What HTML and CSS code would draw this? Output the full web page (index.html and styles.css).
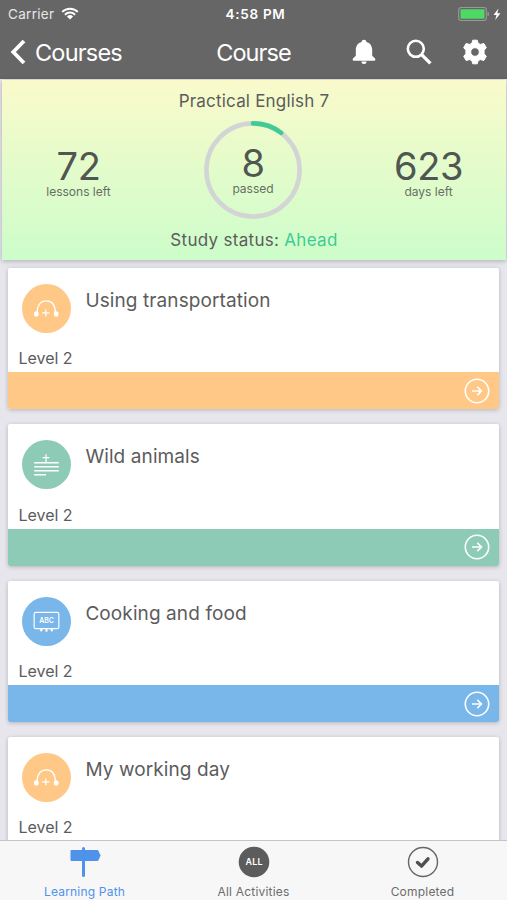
FILE: index.html
```html
<!DOCTYPE html>
<html lang="en">
<head>
  <meta charset="UTF-8">
  <meta name="viewport" content="width=device-width, initial-scale=1">
  <title>Course</title>
  <link rel="stylesheet" href="styles.css">
</head>
<body>
  <!-- shared icons -->
  <svg class="sprite" width="0" height="0">
    <symbol id="icon-audio" viewBox="0 0 50 50">
      <path d="M15.400 29.500c0-7.500 3.200-12.300 9.300-12.300s9.300 4.800 9.300 12.300" fill="none" stroke="currentColor" stroke-width="1.300"/>
      <ellipse cx="14.600" cy="30.600" rx="2.400" ry="2.800" fill="currentColor"/>
      <ellipse cx="34.900" cy="30.600" rx="2.400" ry="2.800" fill="currentColor"/>
      <path d="M24.300 26v7M20.500 29.500h7.600" fill="none" stroke="currentColor" stroke-width="1.300"/>
    </symbol>
    <symbol id="icon-text" viewBox="0 0 50 50">
      <path d="M24.500 14.500v8M21 18h7" fill="none" stroke="currentColor" stroke-width="1.200"/>
      <path d="M12.500 23.200h25M12.500 27.300h25M12.500 31.400h25M12.500 35.500h12" fill="none" stroke="currentColor" stroke-width="1.400"/>
    </symbol>
    <symbol id="icon-arrow" viewBox="0 0 26 26">
      <circle cx="13" cy="13" r="11.700" fill="none" stroke="currentColor" stroke-width="1.600"/>
      <path d="M8 13h9M13.300 8.900l4.200 4.100-4.200 4.100" fill="none" stroke="currentColor" stroke-width="1.500"/>
    </symbol>
  </svg>

  <div class="app">
    <header class="header">
      <div class="status-bar">
        <div class="status-left">
          <span class="carrier">Carrier</span>
          <svg width="18" height="13" viewBox="0 0 18 13">
            <path d="M1.200 4.900a11 11 0 0 1 15.600 0M3.900 7.700a7.200 7.200 0 0 1 10.200 0" fill="none" stroke="#fff" stroke-width="2"/>
            <path d="M5.900 9.500a4.500 4.500 0 0 1 6.200 0L9 12.600z" fill="#fff"/>
          </svg>
        </div>
        <span class="time">4:58 PM</span>
        <svg class="battery" width="46" height="16" viewBox="0 0 46 16">
          <rect x="1.700" y="1.500" width="27.600" height="13" rx="2.500" fill="none" stroke="#999" stroke-width="1.100"/>
          <rect x="3.500" y="3.300" width="24" height="9.400" rx="1" fill="#4cd964"/>
          <path d="M30.500 5.800a2.300 2.300 0 0 1 0 4.400z" fill="#999"/>
          <path d="M41.500 2.500l-5 6.400h3l-1.300 5 5.300-6.700h-3.200z" fill="#fff"/>
        </svg>
      </div>
      <div class="nav-bar">
        <a class="back">
          <svg width="16" height="26" viewBox="0 0 16 26"><path d="M14 2L3.300 13 14 24" fill="none" stroke="#fff" stroke-width="3.800"/></svg>
          <span>Courses</span>
        </a>
        <h1 class="nav-title">Course</h1>
        <div class="nav-actions">
          <svg width="24" height="26" viewBox="0 0 24 26">
            <path d="M12 .8c1.500 0 2.300.9 2.400 2.100 3.700.9 5.800 4 5.800 7.900v6l2.900 2.700q.9 2-.7 2.200H1.600q-1.600-.2-.7-2.200l2.900-2.700v-6c0-3.900 2.100-7 5.800-7.900C9.700 1.700 10.500.8 12 .8zM9.500 22.600h5a2.500 2.500 0 0 1-5 0z" fill="#fff"/>
          </svg>
          <svg width="26" height="26" viewBox="0 0 26 26">
            <circle cx="9.800" cy="9.800" r="8" fill="none" stroke="#fff" stroke-width="2.600"/>
            <path d="M15.600 15.600l8.800 8.800" stroke="#fff" stroke-width="3.400"/>
          </svg>
          <svg width="26" height="26" viewBox="0 0 26 26">
            <path fill="#fff" stroke="#fff" stroke-width="1" stroke-linejoin="round" fill-rule="evenodd" d="M10.700 1.200h4.600l.7 3 2.400 1.200 3.500-.9 2.400 4.200-2.200 2.500v3.600l2.200 2.500-2.400 4.200-3.500-.9-2.400 1.200-.7 3h-4.600l-.7-3-2.400-1.200-3.500.9-2.400-4.200 2.200-2.500v-3.600L1.700 8.700l2.400-4.200 3.500.9L10 4.200zM13 8.700a4.300 4.300 0 1 0 0 8.600 4.300 4.300 0 0 0 0-8.600z"/>
          </svg>
        </div>
      </div>
    </header>

    <section class="summary">
      <h2 class="course-name">Practical English 7</h2>
      <div class="stats">
        <div class="stat side">
          <span class="stat-value">72</span>
          <span class="stat-label">lessons left</span>
        </div>
        <div class="progress">
          <svg class="ring" viewBox="0 0 98 98">
            <circle cx="49" cy="49" r="46.600" fill="none" stroke="#d3d5d5" stroke-width="4.600"/>
            <path d="M49 2.400A46.600 46.600 0 0 1 77 11.750" fill="none" stroke="#3ecb94" stroke-width="4.600" stroke-linecap="round"/>
          </svg>
          <div class="stat">
            <span class="stat-value">8</span>
            <span class="stat-label">passed</span>
          </div>
        </div>
        <div class="stat side">
          <span class="stat-value">623</span>
          <span class="stat-label">days left</span>
        </div>
      </div>
      <p class="study-status">Study status: <span class="ahead">Ahead</span></p>
    </section>

    <main class="lessons">
      <article class="card orange">
        <div class="card-body">
          <svg class="badge"><use href="#icon-audio"/></svg>
          <h3>Using transportation</h3>
        </div>
        <p class="level">Level 2</p>
        <div class="card-bar"><svg class="go"><use href="#icon-arrow"/></svg></div>
      </article>
      <article class="card green">
        <div class="card-body">
          <svg class="badge"><use href="#icon-text"/></svg>
          <h3>Wild animals</h3>
        </div>
        <p class="level">Level 2</p>
        <div class="card-bar"><svg class="go"><use href="#icon-arrow"/></svg></div>
      </article>
      <article class="card blue">
        <div class="card-body">
          <svg class="badge" viewBox="0 0 50 50">
            <rect x="12.400" y="15.700" width="25.200" height="16.600" rx="1.800" fill="none" stroke="#fff" stroke-width="1.200"/>
            <path d="M20.500 32.500l-1.600 2.300M25 32.500v3M29.500 32.500l1.600 2.300" stroke="#fff" stroke-width="1.900"/>
            <text x="25" y="26.600" text-anchor="middle" class="badge-text">ABC</text>
          </svg>
          <h3>Cooking and food</h3>
        </div>
        <p class="level">Level 2</p>
        <div class="card-bar"><svg class="go"><use href="#icon-arrow"/></svg></div>
      </article>
      <article class="card orange">
        <div class="card-body">
          <svg class="badge"><use href="#icon-audio"/></svg>
          <h3>My working day</h3>
        </div>
        <p class="level">Level 2</p>
        <div class="card-bar"><svg class="go"><use href="#icon-arrow"/></svg></div>
      </article>
    </main>

    <nav class="tab-bar">
      <a class="tab active">
        <svg width="32" height="32" viewBox="0 0 32 32">
          <path d="M13 2.500a1.500 1.500 0 0 1 3 0V4h12.200q.8 0 1.200.8l2.200 4.700-2.200 4.700q-.4.800-1.200.8H16v14.500a1.500 1.500 0 0 1-3 0V15H2.300q-.8 0-.8-.8V4.800q0-.8.800-.8H13z" fill="#4f92ea"/>
        </svg>
        <span>Learning Path</span>
      </a>
      <a class="tab">
        <svg width="32" height="32" viewBox="0 0 32 32">
          <circle cx="16" cy="16" r="15.300" fill="#5c5c5c"/>
          <text x="16.200" y="19.300" text-anchor="middle" class="all-text">ALL</text>
        </svg>
        <span>All Activities</span>
      </a>
      <a class="tab">
        <svg width="32" height="32" viewBox="0 0 32 32">
          <circle cx="16" cy="16" r="14.500" fill="none" stroke="#666" stroke-width="1.400"/>
          <path d="M10.500 16.500l4 3.600 6.500-7.300" fill="none" stroke="#505050" stroke-width="3.400" stroke-linecap="round" stroke-linejoin="round"/>
        </svg>
        <span>Completed</span>
      </a>
    </nav>
  </div>
</body>
</html>
```
FILE: styles.css
```css
* {
  box-sizing: border-box;
}
body {
  margin: 0;
  background: #e6e6ec;
  color: #5c5c5c;
  font-family: Inter, "Liberation Sans", sans-serif;
}
h1, h2, h3, p {
  margin: 0;
  font-weight: 400;
}
svg {
  display: block;
  flex: none;
}
.sprite {
  position: absolute;
}
.app {
  height: 900px;
  display: flex;
  flex-direction: column;
  overflow: hidden;
}

/* header */
.header {
  flex: none;
  height: 79px;
  background: #666;
  color: #fff;
}
.status-bar {
  display: grid;
  grid-template-columns: 1fr auto 1fr;
  align-items: center;
  height: 26px;
  padding: 1px 4px 0 8px;
  font-size: 13.5px;
}
.status-left {
  display: flex;
  align-items: center;
  gap: 7px;
}
.carrier {
  color: #e6e6e6;
  letter-spacing: 0.3px;
}
.time {
  font-weight: 600;
  font-size: 13.5px;
  letter-spacing: 0.7px;
}
.battery {
  justify-self: end;
}
.nav-bar {
  display: grid;
  grid-template-columns: 1fr auto 1fr;
  align-items: center;
  height: 52px;
  padding: 0 19px 0 10px;
}
.back {
  display: flex;
  align-items: center;
  gap: 9px;
  font-size: 23.5px;
  letter-spacing: -0.8px;
}
.nav-title {
  font-size: 23.5px;
  letter-spacing: -0.9px;
  margin-left: 9px;
}
.nav-actions {
  display: flex;
  justify-content: flex-end;
  gap: 30px;
}

/* course summary */
.summary {
  flex: none;
  height: 180px;
  margin: 1px 1px 0 2px;
  padding-top: 10px;
  background: linear-gradient(#fafacb, #ccfdca);
  box-shadow: 0 1px 5px rgba(0, 0, 0, 0.25);
  text-align: center;
}
.course-name, .study-status {
  font-size: 17px;
  letter-spacing: 0.2px;
  line-height: 22px;
}
.study-status {
  padding-top: 1px;
  letter-spacing: 0.3px;
}
.stats {
  display: grid;
  grid-template-columns: 153px 1fr 155px;
  align-items: center;
  height: 116px;
}
.stat {
  display: flex;
  flex-direction: column;
  align-items: center;
}
.stat.side {
  padding-top: 5px;
}
.stat-value {
  font-size: 38px;
  letter-spacing: -0.4px;
  line-height: 38px;
  color: #505652;
}
.stat-label {
  font-size: 12px;
  line-height: 14px;
  color: #686e68;
}
.progress {
  display: grid;
  place-items: center;
}
.progress > * {
  grid-area: 1 / 1;
}
.ring {
  width: 98px;
  height: 98px;
}
.ahead {
  color: #3ecb94;
}

/* lesson cards */
.lessons {
  flex: 1;
  min-height: 0;
  overflow: hidden;
  padding: 8px 7.6px 0 8.4px;
}
.card {
  height: 141.3px;
  margin-bottom: 15.1px;
  background: #fff;
  border-radius: 2px;
  box-shadow: 0 1px 4px rgba(0, 0, 0, 0.22);
  display: flex;
  flex-direction: column;
}
.card-body {
  flex: 1;
  display: flex;
  gap: 14px;
  padding: 16px 14px 0;
}
.card h3 {
  font-size: 19px;
  letter-spacing: 0.1px;
  line-height: 24px;
  margin-top: 5px;
}
.level {
  padding-left: 10px;
  font-size: 16px;
  line-height: 20px;
  margin-bottom: 4px;
}
.badge {
  width: 49px;
  height: 49px;
  border-radius: 50%;
  background: var(--accent);
  color: #fff;
}
.badge-text {
  font-size: 7px;
  font-weight: 600;
  fill: #fff;
}
.card-bar {
  height: 37px;
  display: flex;
  align-items: center;
  justify-content: flex-end;
  padding-right: 9.5px;
  border-radius: 0 0 2px 2px;
  background: var(--accent);
  color: #fff;
}
.go {
  width: 26px;
  height: 26px;
}
.orange {
  --accent: #ffc886;
}
.green {
  --accent: #8ecbb7;
}
.blue {
  --accent: #79b6e9;
}

/* bottom tabs */
.tab-bar {
  flex: none;
  height: 60px;
  display: grid;
  grid-template-columns: repeat(3, 1fr);
  background: #f7f7f7;
  border-top: 1px solid #c4c4c8;
  z-index: 1;
}
.tab {
  display: flex;
  flex-direction: column;
  align-items: center;
  gap: 6px;
  padding-top: 5px;
  font-size: 12px;
  letter-spacing: 0.2px;
  line-height: 16px;
  color: #6c6c6c;
}
.tab.active {
  color: #4f92ea;
}
.all-text {
  font-size: 9px;
  font-weight: 600;
  fill: #fff;
}
```
